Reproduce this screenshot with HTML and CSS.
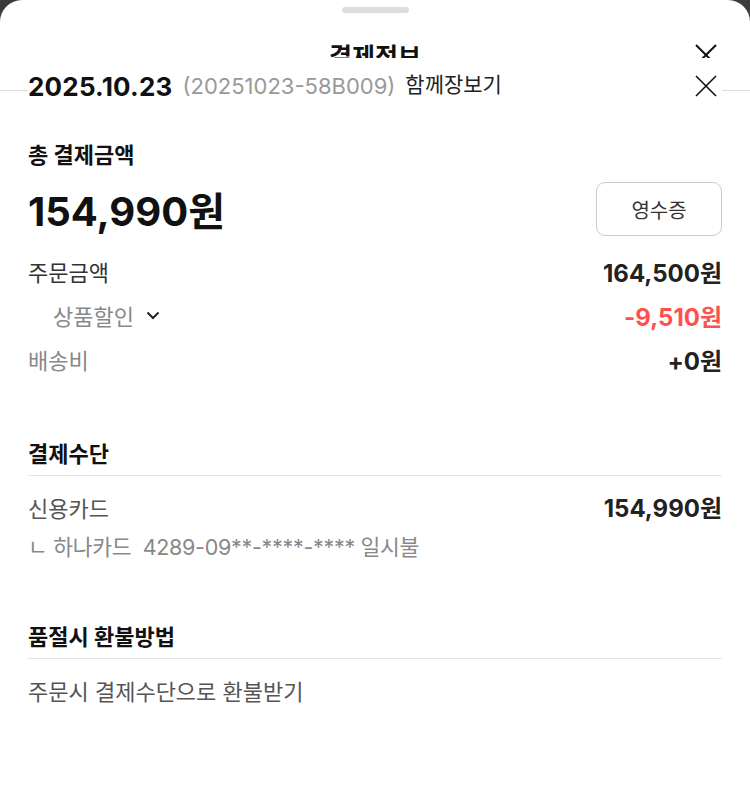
FILE: index.html
```html
<!DOCTYPE html>
<html lang="ko">
<head>
  <meta charset="UTF-8">
  <title>결제정보</title>
  <link rel="stylesheet" href="styles.css">
</head>
<body>

  <div class="sheet">
    <div class="sheet-head">
      <span class="handle"></span>
      <div class="title-row">
        <h2 class="sheet-title">결제정보</h2>
        <button class="close-btn" aria-label="닫기">
          <svg width="22" height="22" viewBox="0 0 22 22"><path d="M1 1L21 21M21 1L1 21" stroke="#111" stroke-width="2" fill="none"/></svg>
        </button>
      </div>
    </div>

    <div class="sheet-body">
      <div class="order-row">
        <span class="order-date">2025.10.23</span>
        <span class="order-no">(20251023-58B009)</span>
        <span class="order-tag">함께장보기</span>
        <button class="close-btn" aria-label="닫기">
          <svg width="22" height="22" viewBox="0 0 22 22"><path d="M1 1L21 21M21 1L1 21" stroke="#111" stroke-width="1.6" fill="none"/></svg>
        </button>
      </div>

      <div class="total-label">총 결제금액</div>
      <div class="total-row">
        <span class="total-amount">154,990원</span>
        <button class="receipt-btn">영수증</button>
      </div>

      <div class="detail">
        <div class="row">
          <span class="label dark">주문금액</span>
          <span class="value">164,500원</span>
        </div>
        <div class="row">
          <span class="label sub">상품할인
            <svg width="14" height="9" viewBox="0 0 14 9"><path d="M1.5 1.5L7 7L12.5 1.5" stroke="#222" stroke-width="2" fill="none"/></svg>
          </span>
          <span class="value red">-9,510원</span>
        </div>
        <div class="row">
          <span class="label">배송비</span>
          <span class="value">+0원</span>
        </div>
      </div>

      <div class="section">
        <div class="section-title">결제수단</div>
        <div class="pay-list">
          <div class="pay-row">
            <span class="label mid">신용카드</span>
            <span class="value">154,990원</span>
          </div>
          <div class="pay-row">
            <span class="label card">ㄴ 하나카드&nbsp; 4289-09**-****-**** 일시불</span>
          </div>
        </div>
      </div>

      <div class="section refund">
        <div class="section-title">품절시 환불방법</div>
        <div class="pay-list">
          <div class="pay-row">
            <span class="label mid">주문시 결제수단으로 환불받기</span>
          </div>
        </div>
      </div>
    </div>
  </div>

</body>
</html>
```

FILE: styles.css
```css
* {
  box-sizing: border-box;
}

html, body {
  height: 100%;
}

body {
  margin: 0;
  background: #3c3c3c;
  font-family: Inter, "Noto Sans CJK KR", sans-serif;
  color: #111;
}

.sheet {
  min-height: 100%;
  background: #fff;
  border-radius: 22px 22px 0 0;
  overflow: hidden;
}

.sheet-head {
  height: 91px;
  border-bottom: 1px solid #ddd;
  padding-top: 7px;
}

.handle {
  display: block;
  width: 67px;
  height: 6px;
  margin: 0 auto;
  background: #ddd;
  border-radius: 3px;
}

.title-row {
  display: flex;
  justify-content: center;
  align-items: center;
  position: relative;
  height: 40px;
  margin-top: 24px;
  padding: 0 28px;
}

.sheet-title {
  margin: 0;
  font-size: 25px;
  font-weight: 700;
  line-height: 40px;
}

.title-row .close-btn {
  position: absolute;
  right: 28px;
  top: 2px;
}

.close-btn {
  width: 32px;
  height: 32px;
  padding: 0;
  border: none;
  background: none;
  display: flex;
  align-items: center;
  justify-content: center;
  cursor: pointer;
}

.sheet-body {
  padding: 0 28px;
}

.order-row {
  position: relative;
  z-index: 1;
  display: flex;
  align-items: center;
  height: 56px;
  margin-top: -33px;
  background: #fff;
}

.order-date {
  font-size: 26px;
  font-weight: 700;
  letter-spacing: 0.2px;
}

.order-no {
  margin-left: 10px;
  font-size: 22px;
  color: #999;
}

.order-tag {
  margin-left: 10px;
  margin-bottom: 6px;
  font-size: 21px;
  color: #222;
}

.order-row .close-btn {
  margin-left: auto;
}

.total-label {
  margin-top: 27px;
  font-size: 22px;
  font-weight: 700;
  line-height: 28px;
}

.total-row {
  display: flex;
  align-items: center;
  justify-content: space-between;
  height: 54px;
  margin-top: 13px;
}

.total-amount {
  font-size: 40px;
  font-weight: 700;
}

.receipt-btn {
  width: 126px;
  height: 54px;
  border: 1px solid #ccc;
  border-radius: 9px;
  background: #fff;
  font-family: inherit;
  font-size: 20px;
  color: #333;
}

.detail {
  margin-top: 13px;
}

.row {
  display: flex;
  align-items: center;
  justify-content: space-between;
  height: 44px;
}

.label {
  font-size: 22px;
  color: #888;
}

.label.dark {
  color: #333;
}

.label.mid {
  color: #555;
}

.label.card {
  font-size: 21.5px;
  letter-spacing: -0.3px;
}

.label.sub {
  display: flex;
  align-items: center;
  gap: 12px;
  padding-left: 25px;
}

.value {
  font-size: 24px;
  font-weight: 700;
  color: #222;
}

.value.red {
  color: #ff5050;
}

.section {
  margin-top: 59px;
}

.refund {
  margin-top: 58px;
}

.section-title {
  font-size: 22px;
  font-weight: 700;
  line-height: 28px;
  padding-bottom: 7px;
  border-bottom: 1px solid #e5e5e5;
}

.pay-list {
  margin-top: 11px;
}

.pay-row {
  display: flex;
  align-items: center;
  justify-content: space-between;
  height: 39px;
}

.refund .pay-row {
  height: 40px;
}
```
